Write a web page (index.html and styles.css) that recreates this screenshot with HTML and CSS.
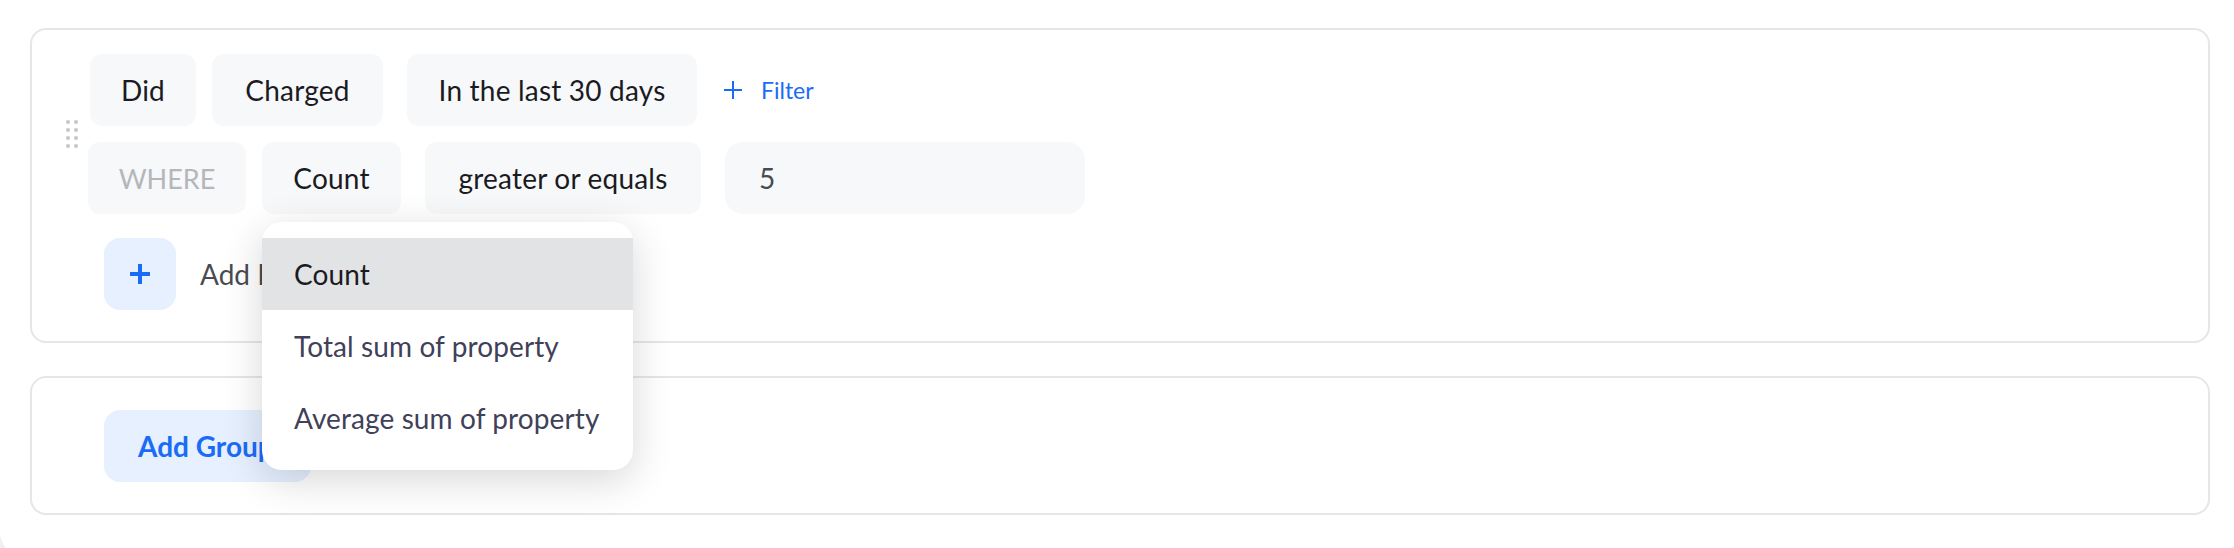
FILE: index.html
```html
<!DOCTYPE html>
<html lang="en">
<head>
<meta charset="utf-8">
<title>Segment conditions</title>
<link rel="stylesheet" href="styles.css">
</head>
<body>
<main class="panel">
  <section class="card">
    <div class="group">
      <svg class="handle" width="12" height="28" viewBox="0 0 12 28" aria-hidden="true">
        <g fill="#c4c6c8">
          <circle cx="2" cy="2" r="2"/><circle cx="10" cy="2" r="2"/>
          <circle cx="2" cy="10" r="2"/><circle cx="10" cy="10" r="2"/>
          <circle cx="2" cy="18" r="2"/><circle cx="10" cy="18" r="2"/>
          <circle cx="2" cy="26" r="2"/><circle cx="10" cy="26" r="2"/>
        </g>
      </svg>
      <div class="rows">
        <div class="row row-did">
          <div class="chip chip-did">Did</div>
          <div class="chip chip-charged">Charged</div>
          <div class="chip chip-range">In the last 30 days</div>
          <div class="filter">
            <svg width="20" height="20" viewBox="0 0 20 20" aria-hidden="true"><path d="M10 1v18M1 10h18" stroke="#1a6cf6" stroke-width="2" fill="none"/></svg>
            <span>Filter</span>
          </div>
        </div>
        <div class="row row-where">
          <div class="chip chip-where">WHERE</div>
          <div class="count-wrap">
            <div class="chip chip-count">Count</div>
            <ul class="menu">
              <li class="menu-item is-active">Count</li>
              <li class="menu-item">Total sum of property</li>
              <li class="menu-item">Average sum of property</li>
            </ul>
          </div>
          <div class="chip chip-op">greater or equals</div>
          <div class="chip chip-value">5</div>
        </div>
      </div>
    </div>
    <div class="add-row">
      <div class="add-btn">
        <svg width="22" height="22" viewBox="0 0 22 22" aria-hidden="true"><path d="M11 1v20M1 11h20" stroke="#1a6cf6" stroke-width="4" fill="none"/></svg>
      </div>
      <span class="add-label">Add Event</span>
    </div>
  </section>
  <section class="card card-group">
    <div class="group-btn">Add Group</div>
  </section>
</main>
</body>
</html>
```
FILE: styles.css
```css
* { box-sizing: border-box; }
html, body { margin: 0; height: 100%; }
body {
  background: #f0f0f1;
  font-family: "Lato", "Liberation Sans", sans-serif;
  overflow: hidden;
}
.panel {
  background: #fff;
  height: 556px;
  margin-right: -4px;
  padding: 28px 28px 0 30px;
  border-radius: 0 0 24px 24px;
}
.card {
  border: 2px solid #e5e6e7;
  border-radius: 16px;
  padding: 24px 0 31px 34px;
}
.group { display: flex; align-items: center; gap: 10px; }
.rows { display: flex; flex-direction: column; gap: 16px; }
.row { display: flex; align-items: center; }
.row-did { padding-left: 2px; }
.chip {
  height: 72px;
  display: flex;
  align-items: center;
  justify-content: center;
  background: #f7f8fa;
  border-radius: 12px;
  font-size: 28px;
  letter-spacing: 0.2px;
  color: #1b1b1f;
  white-space: nowrap;
}
.chip-did { width: 106px; }
.chip-charged { width: 171px; margin-left: 16px; }
.chip-range { width: 290px; margin-left: 24px; }
.filter {
  display: flex;
  align-items: center;
  gap: 18px;
  margin-left: 26px;
  color: #1a6cf6;
  font-size: 23px;
}
.chip-where { width: 158px; color: #b4b7ba; font-size: 27px; letter-spacing: 0; }
.count-wrap { position: relative; margin-left: 16px; }
.chip-count { width: 139px; }
.chip-op { width: 276px; margin-left: 24px; }
.chip-value {
  width: 360px;
  margin-left: 24px;
  justify-content: flex-start;
  padding-left: 34px;
  color: #4a4b50;
  border-radius: 18px;
}
.menu {
  position: absolute;
  z-index: 5;
  top: 80px;
  left: 0;
  width: 371px;
  margin: 0;
  padding: 16px 0;
  list-style: none;
  background: #fff;
  border-radius: 20px;
  box-shadow: 0 10px 40px rgba(0, 0, 0, 0.16);
}
.menu-item {
  height: 72px;
  display: flex;
  align-items: center;
  padding-left: 32px;
  font-size: 28px;
  letter-spacing: 0.1px;
  color: #3f4159;
  white-space: nowrap;
}
.menu-item.is-active { background: #e2e3e5; color: #1b1b1f; }
.add-row { display: flex; align-items: center; gap: 24px; margin: 24px 0 0 38px; }
.add-btn {
  width: 72px;
  height: 72px;
  display: flex;
  align-items: center;
  justify-content: center;
  background: #e6f0ff;
  border-radius: 16px;
}
.add-label { font-size: 28px; color: #4a4b50; white-space: nowrap; }
.card-group { margin-top: 33px; padding: 32px 0 31px 72px; }
.group-btn {
  width: 207px;
  height: 72px;
  display: flex;
  align-items: center;
  padding-left: 34px;
  background: #e6f0ff;
  border-radius: 16px;
  color: #1a6cf6;
  font-size: 28px;
  font-weight: 700;
  white-space: nowrap;
}
```
